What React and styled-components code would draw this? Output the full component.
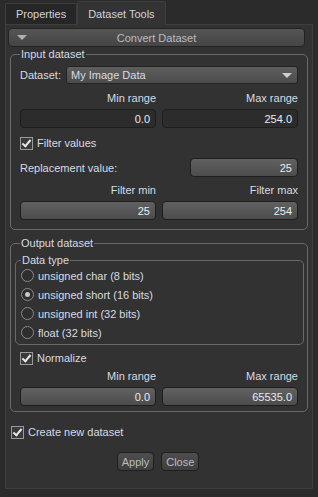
import React from 'react'
import styled, { createGlobalStyle } from 'styled-components'

const Global = createGlobalStyle`
    body {
        margin: 0;
        background: #2b2b2b;
        font-family: "Liberation Sans", "DejaVu Sans", sans-serif;
        font-size: 11px;
        color: #d6dbe2;
    }
`

function App() {
    return (
        <Window>
            <Global />
            <TabBar>
                <Tab>Properties</Tab>
                <Tab active>Dataset Tools</Tab>
            </TabBar>
            <Panel>
                <Header>
                    <Caret />
                    <span>Convert Dataset</span>
                </Header>

                <Group $mt={1} $pt={6} $pb={9}>
                    <legend>Input dataset</legend>
                    <Row>
                        <Label>Dataset:</Label>
                        <Combo>
                            <span>My Image Data</span>
                            <ComboArrow />
                        </Combo>
                    </Row>
                    <Pair $mt={8}>
                        <Field>
                            <RightLabel>Min range</RightLabel>
                            <Input dark>0.0</Input>
                        </Field>
                        <Field>
                            <RightLabel>Max range</RightLabel>
                            <Input dark>254.0</Input>
                        </Field>
                    </Pair>
                    <Check $mt={8}>
                        <Box checked />
                        Filter values
                    </Check>
                    <Row $mt={8}>
                        <Label>Replacement value:</Label>
                        <Input $w={108}>25</Input>
                    </Row>
                    <Pair $mt={7}>
                        <Field>
                            <RightLabel>Filter min</RightLabel>
                            <Input>25</Input>
                        </Field>
                        <Field>
                            <RightLabel>Filter max</RightLabel>
                            <Input>254</Input>
                        </Field>
                    </Pair>
                </Group>

                <Group $mt={7} $pb={5}>
                    <legend>Output dataset</legend>
                    <SubGroup>
                        <legend>Data type</legend>
                        <Radio><Dot /> unsigned char (8 bits)</Radio>
                        <Radio><Dot checked /> unsigned short (16 bits)</Radio>
                        <Radio><Dot /> unsigned int (32 bits)</Radio>
                        <Radio><Dot /> float (32 bits)</Radio>
                    </SubGroup>
                    <Check $mt={6}>
                        <Box checked />
                        Normalize
                    </Check>
                    <Pair $mt={5}>
                        <Field>
                            <RightLabel>Min range</RightLabel>
                            <Input>0.0</Input>
                        </Field>
                        <Field>
                            <RightLabel>Max range</RightLabel>
                            <Input>65535.0</Input>
                        </Field>
                    </Pair>
                </Group>

                <Check $mt={13} $ml={3}>
                    <Box checked />
                    Create new dataset
                </Check>

                <Buttons>
                    <Button>Apply</Button>
                    <Button>Close</Button>
                </Buttons>
            </Panel>
        </Window>
    )
}

export default App

const Window = styled.div`
    width: 318px;
    height: 497px;
    box-sizing: border-box;
    padding: 2px 5px 8px 5px;
    display: flex;
    flex-direction: column;
`

const TabBar = styled.div`
    display: flex;
    align-items: flex-end;
    height: 23px;
    margin-bottom: -1px;
    position: relative;
    z-index: 1;
`

const Tab = styled.div`
    box-sizing: border-box;
    height: ${p => (p.active ? '24px' : '22px')};
    padding: 0 10px;
    display: flex;
    align-items: center;
    justify-content: center;
    white-space: nowrap;
    border: 1px solid #3e3e3e;
    border-bottom: ${p => (p.active ? 'none' : '1px solid #3e3e3e')};
    border-radius: 2px 2px 0 0;
    background: ${p => (p.active ? '#333333' : '#262626')};
    color: #cfd4da;
    min-width: ${p => (p.active ? '88px' : '71px')};
`

const Panel = styled.div`
    flex: 1;
    box-sizing: border-box;
    border: 1px solid #3e3e3e;
    background: #323232;
    padding: 3px 4px 0 2px;
    display: flex;
    flex-direction: column;
`

const Header = styled.div`
    height: 19px;
    box-sizing: border-box;
    margin-right: 3px;
    border: 1px solid #232323;
    border-radius: 4px;
    background: linear-gradient(#555555, #454545);
    display: flex;
    align-items: center;
    justify-content: center;
    position: relative;
    color: #b8bcc2;
`

const Caret = styled.span`
    position: absolute;
    left: 8px;
    top: 6px;
    width: 0;
    height: 0;
    border-left: 5px solid transparent;
    border-right: 5px solid transparent;
    border-top: 5px solid #b0b0b0;
`

const Group = styled.fieldset`
    margin: ${p => p.$mt || 0}px 0 0 2px;
    padding: ${p => (p.$pt === undefined ? 5 : p.$pt)}px 9px ${p => (p.$pb === undefined ? 8 : p.$pb)}px 9px;
    border: 1px solid #6a6a6a;
    border-radius: 5px;
    min-width: 0;

    legend {
        padding: 0 1px;
        margin-left: 0;
        color: #d6dbe2;
    }
`

const SubGroup = styled(Group)`
    margin: 0 -6px 0 -5px;
    padding: 0 5px 2px 5px;
`

const Row = styled.div`
    display: flex;
    align-items: center;
    justify-content: space-between;
    margin-top: ${p => p.$mt || 0}px;
`

const Label = styled.span`
    white-space: nowrap;
`

const Combo = styled.div`
    width: 232px;
    height: 18px;
    box-sizing: border-box;
    border: 1px solid #232323;
    border-radius: 3px;
    background: linear-gradient(#5e5e5e, #4c4c4c);
    display: flex;
    align-items: center;
    justify-content: space-between;
    padding: 0 5px 0 4px;
`

const ComboArrow = styled.span`
    width: 0;
    height: 0;
    border-left: 5px solid transparent;
    border-right: 5px solid transparent;
    border-top: 5px solid #d0d0d0;
`

const Pair = styled.div`
    display: grid;
    grid-template-columns: 1fr 1fr;
    column-gap: 6px;
    margin-top: ${p => p.$mt || 0}px;
`

const Field = styled.div`
    display: flex;
    flex-direction: column;
`

const RightLabel = styled.span`
    text-align: right;
    margin-bottom: 5px;
`

const Input = styled.div`
    width: ${p => (p.$w ? `${p.$w}px` : 'auto')};
    height: 19px;
    box-sizing: border-box;
    border: 1px solid #1e1e1e;
    border-radius: 4px;
    background: ${p => (p.dark ? '#2c2c2c' : 'linear-gradient(#616161, #4c4c4c)')};
    display: flex;
    align-items: center;
    justify-content: flex-end;
    padding: 0 5px;
    color: #e8ecf0;
`

const Check = styled.div`
    display: flex;
    align-items: center;
    gap: 4px;
    height: 14px;
    margin-top: ${p => p.$mt || 0}px;
    margin-left: ${p => p.$ml || 0}px;
`

const Box = styled.span`
    width: 11px;
    height: 11px;
    border: 1px solid #9a9a9a;
    background: #3a3a3a;
    position: relative;

    &::after {
        content: '';
        display: ${p => (p.checked ? 'block' : 'none')};
        position: absolute;
        left: 3px;
        top: 0px;
        width: 3px;
        height: 7px;
        border: solid #e8e8e8;
        border-width: 0 2px 2px 0;
        transform: rotate(40deg);
    }
`

const Radio = styled.div`
    display: flex;
    align-items: center;
    gap: 4px;
    height: 19px;
`

const Dot = styled.span`
    width: 11px;
    height: 11px;
    border-radius: 50%;
    border: 1px solid #8a8a8a;
    background: #2e2e2e;
    display: flex;
    align-items: center;
    justify-content: center;

    &::after {
        content: '';
        display: ${p => (p.checked ? 'block' : 'none')};
        width: 5px;
        height: 5px;
        border-radius: 50%;
        background: #c8c8c8;
    }
`

const Buttons = styled.div`
    display: flex;
    justify-content: center;
    gap: 7px;
    margin-top: 13px;
`

const Button = styled.div`
    height: 19px;
    box-sizing: border-box;
    padding: 0 4px;
    border: 1px solid #1f1f1f;
    border-radius: 4px;
    background: linear-gradient(#4e4e4e, #3f3f3f);
    display: flex;
    align-items: center;
    color: #b8bcc2;
`
